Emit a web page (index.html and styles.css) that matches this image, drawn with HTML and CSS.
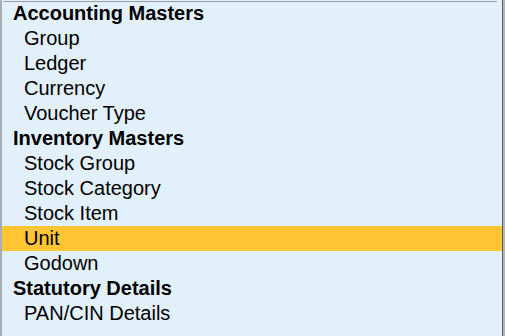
FILE: index.html
```html
<!DOCTYPE html>
<html>
<head>
<meta charset="utf-8">
<link rel="stylesheet" href="styles.css">
</head>
<body>
<div class="frame">
  <div class="panel">
    <div class="topline"></div>
    <ul class="list">
      <li class="head">Accounting Masters</li>
      <li class="item">Group</li>
      <li class="item">Ledger</li>
      <li class="item">Currency</li>
      <li class="item">Voucher Type</li>
      <li class="head">Inventory Masters</li>
      <li class="item">Stock Group</li>
      <li class="item">Stock Category</li>
      <li class="item">Stock Item</li>
      <li class="item selected">Unit</li>
      <li class="item">Godown</li>
      <li class="head">Statutory Details</li>
      <li class="item">PAN/CIN Details</li>
    </ul>
  </div>
  <div class="edge"></div>
</div>
</body>
</html>
```

FILE: styles.css
```css
html, body {
  margin: 0;
  padding: 0;
  background: #e2f0fb;
}
body {
  font-family: "Liberation Sans", Arial, sans-serif;
  font-size: 20px;
  color: #000;
}
.frame {
  display: flex;
  width: 505px;
  height: 336px;
  overflow: hidden;
}
.panel {
  position: relative;
  flex: 1;
  border-left: 2px solid #a8adb4;
  border-right: 1px solid #5b5f66;
  background: #e2f0fb;
}
.topline {
  position: absolute;
  left: 1px;
  top: 1px;
  width: 494px;
  height: 1px;
  background: #979ca4;
}
.edge {
  width: 2px;
  background: #b3b6b2;
}
.list {
  list-style: none;
  margin: 0;
  padding: 1px 0 0 0;
}
.list li {
  height: 25px;
  line-height: 24px;
  white-space: nowrap;
}
.head {
  font-weight: bold;
  padding-left: 11px;
}
.item {
  padding-left: 22px;
}
.selected {
  background: #ffc533;
}
```
